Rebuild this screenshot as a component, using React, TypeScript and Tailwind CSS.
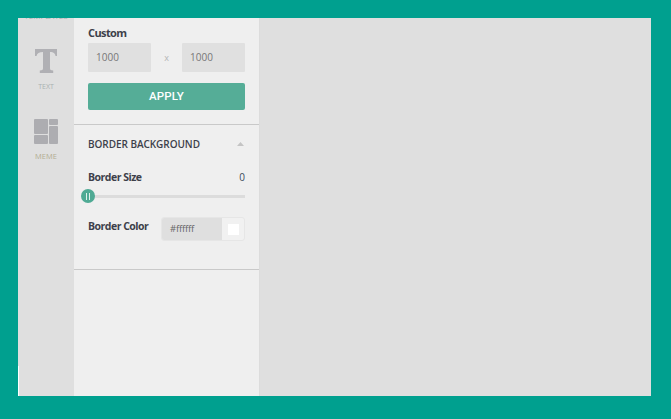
export default function App() {
  return (
    <div className="h-[419px] w-[671px] overflow-hidden bg-[#00a08f] pt-[18px] pl-[18px] pr-[20px] pb-[23px] font-['Open_Sans',sans-serif]">
      <div className="flex h-[378px] overflow-hidden bg-[#dfdfdf]">
        {/* icon rail */}
        <div className="relative flex w-[56px] shrink-0 flex-col items-center">
          <div className="absolute top-[-6px] left-0 w-full text-center text-[8px] leading-[8px] text-[#a9a9ad]">TEMPLATES</div>
          <svg className="mt-[31px]" width="22" height="24" viewBox="0 0 22 24">
            <path fill="#b0b0b4" d="M0 0h22v7h-1.500c-.4-2.600-1.600-3.800-5.500-4v16.500c0 1.300.8 1.800 3.200 2V24H4.800v-2.500c2.400-.2 3.200-.7 3.200-2V3C4.100 3.200 2 4.400 1.500 7H0z" />
          </svg>
          <div className="mt-[9px] text-[7px] leading-[9px] text-[#a9b1b1]">TEXT</div>
          <svg className="mt-[28px]" width="24" height="26" viewBox="0 0 24 26">
            <rect x="0" y="0" width="14" height="15" rx="1" fill="#adadb1" />
            <rect x="0" y="16" width="14" height="9" rx="1" fill="#adadb1" />
            <rect x="15" y="0" width="9" height="6" rx="1" fill="#adadb1" />
            <rect x="15" y="7" width="9" height="18" rx="1" fill="#adadb1" />
          </svg>
          <div className="mt-[7px] text-[7.500px] leading-[9px] text-[#b3ae94]">MEME</div>
          <div className="absolute bottom-0 left-0 h-[30px] w-[1px] bg-white" />
        </div>

        {/* settings panel */}
        <div className="w-[185px] shrink-0 bg-[#efefef]">
          <div className="h-[107px] border-b border-[#c9c9c9] px-[14px] pt-[7px]">
            <div className="text-[11px] leading-[15px] font-bold tracking-[-0.6px] text-[#3d3f4a]">Custom</div>
            <div className="mt-[3px] flex items-center">
              <div className="flex h-[29px] w-[63px] items-center rounded-[1px] bg-[#e0e0e0] pl-[8px] text-[10px] text-[#777]">1000</div>
              <div className="w-[31px] text-center text-[9px] text-[#b5b5b5]">x</div>
              <div className="flex h-[29px] w-[63px] items-center rounded-[1px] bg-[#e0e0e0] pl-[8px] text-[10px] text-[#777]">1000</div>
            </div>
            <div className="mt-[11px] flex h-[27px] w-[157px] items-center justify-center rounded-[2px] bg-[#55ad97] pt-[1px] font-['Roboto',sans-serif] text-[11.500px] font-medium tracking-[0.2px] text-white">APPLY</div>
          </div>

          <div className="h-[145px] border-b border-[#c9c9c9] px-[14px]">
            <div className="flex items-center justify-between pt-[12px]">
              <div className="text-[10px] leading-[14px] font-semibold tracking-[-0.05px] text-[#3d3f4a]">BORDER BACKGROUND</div>
              <svg className="mr-[1px]" width="7" height="4" viewBox="0 0 7 4"><path d="M3.500 0l3.500 4H0z" fill="#c4c4c4" /></svg>
            </div>
            <div className="mt-[19px] flex items-center justify-between">
              <div className="text-[10.500px] leading-[14px] font-bold tracking-[-0.5px] text-[#3d3f4a]">Border Size</div>
              <div className="text-[10px] leading-[14px] text-[#3d4a5a]">0</div>
            </div>
            <div className="relative mt-[5px] h-[14px]">
              <div className="absolute top-[6px] left-0 h-[3px] w-full bg-[#dcdcdc]" />
              <div className="absolute top-0 left-[-7px] flex h-[14px] w-[14px] items-center justify-center gap-[2px] rounded-full bg-[#4faa94]">
                <span className="h-[7px] w-[1px] bg-[#dff0ec]" />
                <span className="h-[7px] w-[1px] bg-[#dff0ec]" />
              </div>
            </div>
            <div className="mt-[14px] flex items-start justify-between">
              <div className="pt-[2px] text-[10.500px] leading-[14px] font-bold tracking-[-0.5px] text-[#3d3f4a]">Border Color</div>
              <div className="flex h-[24px] w-[84px] overflow-hidden rounded-[3px] border border-[#e6e6e6] bg-[#f1f1f1]">
                <div className="flex w-[60px] items-center bg-[#dfdfdf] pl-[8px] text-[9.500px] tracking-[-0.2px] text-[#666]">#ffffff</div>
                <div className="flex flex-1 items-center justify-center">
                  <div className="h-[11px] w-[11px] bg-white" />
                </div>
              </div>
            </div>
          </div>
        </div>

        {/* canvas area */}
        <div className="flex-1 border-l border-[#dcdcdc] bg-[#dfdfdf]" />
      </div>
    </div>
  );
}
